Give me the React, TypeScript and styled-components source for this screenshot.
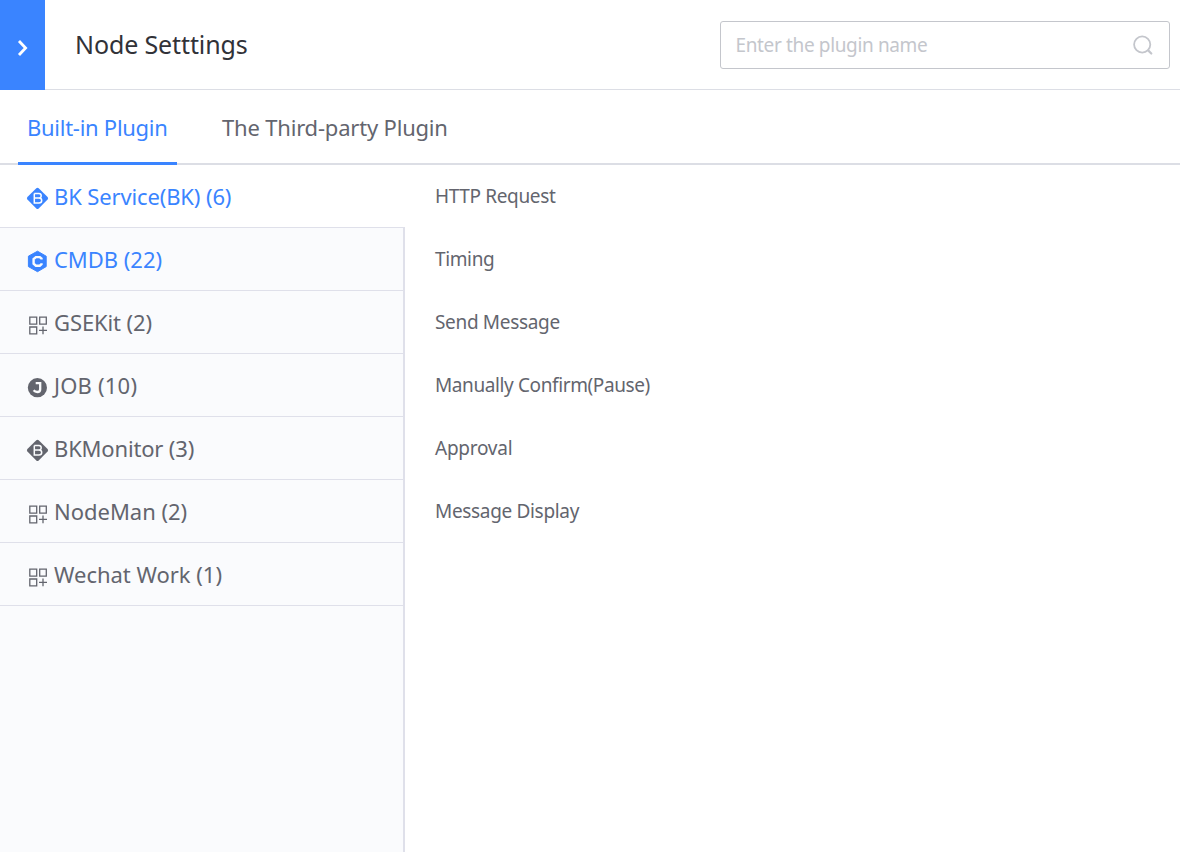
import React, { useState } from "react";
import styled, { createGlobalStyle } from "styled-components";

const GlobalStyle = createGlobalStyle`
  * { box-sizing: border-box; }
  body { margin: 0; background: #fff; font-family: "Noto Sans", "Open Sans", sans-serif; color: #63656e; }
`;

const Page = styled.div`
  width: 100%;
  height: 852px;
  display: flex;
  flex-direction: column;
  overflow: hidden;
`;

const Header = styled.header`
  flex: none;
  height: 90px;
  display: flex;
`;

const Collapse = styled.button`
  width: 45px;
  height: 90px;
  border: 0;
  padding: 6px 0 0;
  background: #3a84ff;
  display: flex;
  align-items: center;
  justify-content: center;
`;

const HeaderBody = styled.div`
  flex: 1;
  display: flex;
  align-items: center;
  justify-content: space-between;
  padding: 0 10px 0 30px;
  border-bottom: 1px solid #dcdee5;
`;

const Title = styled.h1`
  margin: 0;
  padding-bottom: 2px;
  font-size: 25px;
  font-weight: 400;
  line-height: 34px;
  color: #313238;
`;

const Label = styled.span<{ $spacing?: number }>`
  letter-spacing: ${(p) => p.$spacing ?? 0}px;
  white-space: nowrap;
`;

const Search = styled.label`
  width: 450px;
  height: 48px;
  display: flex;
  align-items: center;
  border: 1px solid #c4c6cc;
  border-radius: 3px;
  padding: 1px 15px 0 14.5px;
`;

const SearchInput = styled.input`
  flex: 1;
  border: 0;
  outline: 0;
  padding: 0;
  background: none;
  font-family: inherit;
  font-size: 19px;
  letter-spacing: -0.36px;
  color: #63656e;
  &::placeholder { color: #c4c6cc; opacity: 1; }
`;

const Tabs = styled.nav`
  flex: none;
  height: 75px;
  display: flex;
  gap: 36px;
  padding-left: 18px;
  border-bottom: 2px solid #dcdee5;
`;

const Tab = styled.button<{ $active: boolean }>`
  height: 75px;
  padding: 2px 9px 0 9px;
  border: 0;
  border-bottom: 3px solid ${(p) => (p.$active ? "#3a84ff" : "transparent")};
  background: none;
  font-family: inherit;
  font-size: 22px;
  color: ${(p) => (p.$active ? "#3a84ff" : "#63656e")};
  text-align: left;
  &:first-child { width: 159px; }
`;

const Main = styled.main`
  flex: 1;
  min-height: 0;
  display: flex;
`;

const Sidebar = styled.aside`
  width: 405px;
  display: flex;
  flex-direction: column;
`;

const Group = styled.div<{ $open: boolean; $blue: boolean }>`
  flex: none;
  height: 63px;
  display: flex;
  align-items: center;
  gap: 5px;
  padding: 0 0 0 26px;
  font-size: 22px;
  color: ${(p) => (p.$blue ? "#3a84ff" : "#63656e")};
  background: ${(p) => (p.$open ? "#fff" : "#fafbfd")};
  border-bottom: 1px solid #dfe0ea;
  border-right: ${(p) => (p.$open ? "0" : "2px solid #dfe0ea")};
`;

const Filler = styled.div`
  flex: 1;
  background: #fafbfd;
  border-right: 2px solid #dfe0ea;
`;

const IconSlot = styled.span`
  width: 23px;
  height: 24px;
  display: flex;
  padding-top: 3px;
`;

const Plugins = styled.ul`
  flex: 1;
  margin: 0;
  padding: 0 0 0 30px;
  list-style: none;
`;

const Plugin = styled.li`
  height: 63px;
  line-height: 62px;
  font-size: 19px;
`;

type Kind = "bk" | "cmdb" | "job" | "grid";

const GroupIcon = ({ kind, bg }: { kind: Kind; bg: string }) => (
  <svg width="23" height="23" viewBox="0 0 23 23" fill="none" overflow="visible">
    {kind === "bk" && (
      <>
        <path d="M10.3 1.2Q11.5 0.2 12.7 1.2L21.6 10.1Q22.6 11.3 21.6 12.5L12.7 21.4Q11.5 22.4 10.3 21.4L1.4 12.5Q0.4 11.3 1.4 10.1Z" fill="currentColor" />
        <path d="M8.3 6.4H13Q15.2 6.4 15.2 8.7Q15.2 11 13 11H8.3M13 11Q15.7 11 15.7 13.5Q15.7 16 13 16H8.3V6.4" stroke={bg} strokeWidth="1.5" />
      </>
    )}
    {kind === "cmdb" && (
      <>
        <path d="M11.5 1.2L20.2 6.2V16.6L11.5 21.7L2.4 16.6V6.2Z" fill="currentColor" stroke="currentColor" strokeLinejoin="round" />
        <path d="M15.5 9.6V8.6L13.8 7.1H9.9L7.6 9.1V13.7L9.9 15.7H13.8L15.5 14.2V13.2" stroke={bg} strokeWidth="2.4" />
      </>
    )}
    {kind === "job" && (
      <>
        <circle cx="11.4" cy="11.7" r="9.6" fill="currentColor" />
        <path d="M9.7 7.1H14.2V13.2Q14.2 16 11.4 16Q9 16 7.6 14.3" stroke={bg} strokeWidth="2.3" />
      </>
    )}
    {kind === "grid" && (
      <path d="M3.8 4.2H10.7V11.1H3.8ZM13.7 4.2H20.3V11.1H13.7ZM3.8 14H10.7V20.8H3.8ZM17 13.6V21.2M13 17.4H21" stroke="currentColor" strokeWidth="1.3" />
    )}
  </svg>
);

const groups: { name: string; kind: Kind; blue?: boolean; spacing: number }[] = [
  { name: "BK Service(BK) (6)", kind: "bk", blue: true, spacing: -0.13 },
  { name: "CMDB (22)", kind: "cmdb", blue: true, spacing: -0.03 },
  { name: "GSEKit (2)", kind: "grid", spacing: -0.1 },
  { name: "JOB (10)", kind: "job", spacing: 0.2 },
  { name: "BKMonitor (3)", kind: "bk", spacing: -0.17 },
  { name: "NodeMan (2)", kind: "grid", spacing: -0.02 },
  { name: "Wechat Work (1)", kind: "grid", spacing: -0.02 },
];

const plugins = [
  { name: "HTTP Request", spacing: -0.35 },
  { name: "Timing", spacing: -0.37 },
  { name: "Send Message", spacing: -0.33 },
  { name: "Manually Confirm(Pause)", spacing: -0.39 },
  { name: "Approval", spacing: -0.25 },
  { name: "Message Display", spacing: -0.33 },
];

const tabs = [
  { name: "Built-in Plugin", spacing: -0.27 },
  { name: "The Third-party Plugin", spacing: -0.19 },
];

export default function App() {
  const [tab, setTab] = useState(0);
  return (
    <Page>
      <GlobalStyle />
      <Header>
        <Collapse aria-label="Collapse">
          <svg width="14" height="18" viewBox="0 0 14 18" fill="none">
            <path d="M3 2L9.6 9L3 16" stroke="#fff" strokeWidth="2.8" />
          </svg>
        </Collapse>
        <HeaderBody>
          <Title><Label $spacing={-0.12}>Node Setttings</Label></Title>
          <Search>
            <SearchInput placeholder="Enter the plugin name" />
            <svg width="21" height="21" viewBox="0 0 21 21" fill="none" stroke="#c4c6cc">
              <circle cx="9.2" cy="9.5" r="8.1" strokeWidth="1.8" />
              <path d="M15.4 15.6L18.3 18.5" strokeWidth="2.2" strokeLinecap="round" />
            </svg>
          </Search>
        </HeaderBody>
      </Header>
      <Tabs>
        {tabs.map((t, i) => (
          <Tab key={t.name} $active={i === tab} onClick={() => setTab(i)}>
            <Label $spacing={t.spacing}>{t.name}</Label>
          </Tab>
        ))}
      </Tabs>
      <Main>
        <Sidebar>
          {groups.map((g, i) => (
            <Group key={g.name} $open={i === 0} $blue={!!g.blue}>
              <IconSlot><GroupIcon kind={g.kind} bg={i === 0 ? "#fff" : "#fafbfd"} /></IconSlot>
              <Label $spacing={g.spacing}>{g.name}</Label>
            </Group>
          ))}
          <Filler />
        </Sidebar>
        <Plugins>
          {plugins.map((p) => (
            <Plugin key={p.name}><Label $spacing={p.spacing}>{p.name}</Label></Plugin>
          ))}
        </Plugins>
      </Main>
    </Page>
  );
}
